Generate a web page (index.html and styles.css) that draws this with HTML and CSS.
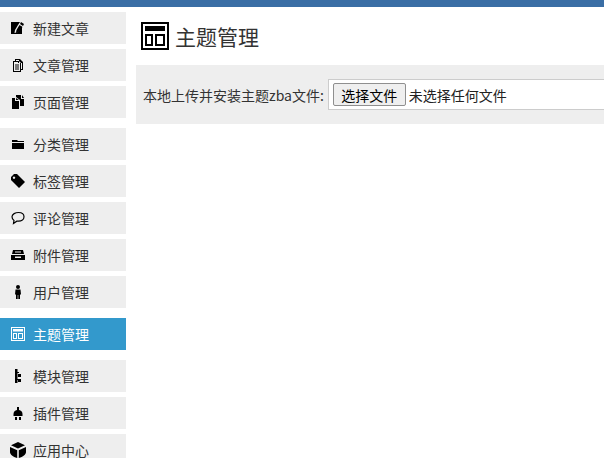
FILE: index.html
```html
<!DOCTYPE html>
<html lang="zh-CN">
<head>
    <meta charset="UTF-8">
    <meta name="viewport" content="width=device-width, initial-scale=1.0">
    <title>主题管理</title>
    <link rel="stylesheet" href="styles.css">
</head>
<body>
    <div class="top-bar"></div>
    <div class="layout">
        <div class="sidebar">
            <ul class="menu">
                <li class="menu-item">
                    <svg class="icon" viewBox="0 0 14 14"><path d="M0 1h9L7 4 4 9l-.5 3L7 11l4-6v8H0z"/><path d="M9 3l1-2 3 2-1 2zM8.500 4l3 2-4 5-2 1-.5-.5.500-2.500z"/></svg>
                    <span>新建文章</span>
                </li>
                <li class="menu-item">
                    <svg class="icon" viewBox="0 0 14 14"><path fill-rule="evenodd" d="M2 3h2V1h5l3 3v8h-2v2H2zM3 4v9h6V5H7V4zM5 2v1h3l2 2v6h1V5H8V2z"/><path d="M4 6.500h4v1H4zM4 8.500h4v1H4zM4 10.500h4v1H4z"/></svg>
                    <span>文章管理</span>
                </li>
                <li class="menu-item">
                    <svg class="icon" viewBox="0 0 14 14"><path d="M1 3h3v3h4v8H1zM5 3l3 2h-3zM5 0h5v4h3v7H9V5L5 2zM11 0l2 3h-2z"/></svg>
                    <span>页面管理</span>
                </li>
            </ul>
            <ul class="menu">
                <li class="menu-item">
                    <svg class="icon" viewBox="0 0 14 14"><path d="M1 4V3h5l1 1h6v1H1zM1 6h12v6H1z"/></svg>
                    <span>分类管理</span>
                </li>
                <li class="menu-item">
                    <svg class="icon" viewBox="0 0 14 14"><path fill-rule="evenodd" d="M0 3l3-3h3l8 8-6 6-8-8zM3 2.500a1.200 1.200 0 1 0 .01 0z"/></svg>
                    <span>标签管理</span>
                </li>
                <li class="menu-item">
                    <svg class="icon" viewBox="0 0 14 14"><path d="M7.500 1.500c3 0 5.500 1.600 5.500 4.300s-2.500 4.400-5.500 4.400H5.800L2.500 12.500l.5-3C1.800 8.700 1 7.400 1 5.800c0-2.700 3.500-4.300 6.500-4.300z" fill="none" stroke="#000" stroke-width="1.200"/></svg>
                    <span>评论管理</span>
                </li>
                <li class="menu-item">
                    <svg class="icon" viewBox="0 0 14 14"><path fill-rule="evenodd" d="M2 2h10l1 4H1zM4 3.500v1h6v-1zM0 7h14v5H0zM4 8.500v1.500h6V8.500z"/></svg>
                    <span>附件管理</span>
                </li>
                <li class="menu-item">
                    <svg class="icon" viewBox="0 0 14 14"><circle cx="7" cy="2" r="2"/><path d="M4.500 4.500h5l.5 5H9v5H7.300V10H6.700v4.500H5v-5H4z"/></svg>
                    <span>用户管理</span>
                </li>
            </ul>
            <ul class="menu">
                <li class="menu-item active">
                    <svg class="icon" viewBox="0 0 14 14"><path fill="#fff" fill-rule="evenodd" d="M0 0h14v14H0zM1 1v12h12V1zM2 2h10v2.500H2zM2 6h4v6H2zM3 7v4h2V7zM7 6h5v6H7zM8 7v4h3V7z"/></svg>
                    <span>主题管理</span>
                </li>
            </ul>
            <ul class="menu">
                <li class="menu-item">
                    <svg class="icon" viewBox="0 0 14 14"><path d="M4 0h2.500v14H4zM6 3h2v1H6zM7 5h3v3H7zM6 10h2v1H6zM7 10h3v3H7z"/></svg>
                    <span>模块管理</span>
                </li>
                <li class="menu-item">
                    <svg class="icon" viewBox="0 0 14 14"><path d="M6 1h2v3c2 .3 3.500 2 3.500 4v2h-9V8C2.500 6 4 4.300 6 4zM4 11h2v3H4zM8 11h2v3H8z"/></svg>
                    <span>插件管理</span>
                </li>
                <li class="menu-item">
                    <svg class="icon icon-large" viewBox="0 0 16 16"><path d="M8 0l7 3.200L8 6.500 1 3.200zM0 5l7.200 3.300V16C3 14.800 0 12.500 0 10zM16 5v5c0 2.500-3 4.800-7.200 6V8.300z"/></svg>
                    <span>应用中心</span>
                </li>
            </ul>
        </div>
        <div class="main">
            <div class="page-title">
                <svg class="title-icon" viewBox="0 0 28 28"><path fill-rule="evenodd" d="M0 0h28v28H0zM2 2v24h24V2zM4 4h20v5H4zM4 12h8v12H4zM6 14v8h4v-8zM14 12h10v12H14zM16 14v8h6v-8z"/></svg>
                <h1>主题管理</h1>
            </div>
            <div class="upload-panel">
                <label class="upload-label">本地上传并安装主题zba文件:</label>
                <div class="file-box">
                    <button class="file-button" type="button">选择文件</button>
                    <span class="file-name">未选择任何文件</span>
                </div>
            </div>
        </div>
    </div>
</body>
</html>
```

FILE: styles.css
```css
html, body {
    height: 100%;
}
body {
    margin: 0;
    overflow: hidden;
    background-color: #fff;
    color: #333;
    font-family: "Noto Sans CJK SC", "Liberation Sans", sans-serif;
    font-size: 14px;
}
.top-bar {
    height: 7px;
    background-color: #3a6ea5;
}
.layout {
    display: flex;
}
.sidebar {
    flex: none;
    width: 126px;
    padding-top: 5px;
}
.menu {
    list-style: none;
    margin: 0 0 10px;
    padding: 0;
}
.menu-item {
    display: flex;
    align-items: center;
    height: 32px;
    margin-bottom: 5px;
    background-color: #eee;
}
.menu-item:last-child {
    margin-bottom: 0;
}
.menu-item.active {
    background-color: #3399cc;
    color: #fff;
}
.icon {
    flex: none;
    width: 14px;
    height: 14px;
    margin: 0 8px 0 11px;
}
.icon-large {
    width: 16px;
    height: 16px;
    margin: 0 7px 0 10px;
}
.main {
    flex: 1;
    min-width: 0;
    margin-left: 10px;
}
.page-title {
    display: flex;
    align-items: center;
    height: 58px;
    padding-left: 5px;
}
.title-icon {
    flex: none;
    width: 28px;
    height: 28px;
    margin-right: 6px;
}
.page-title h1 {
    margin: 0;
    font-size: 21px;
    font-weight: normal;
    color: #333;
}
.upload-panel {
    display: flex;
    align-items: center;
    height: 59px;
    padding-left: 7px;
    overflow: hidden;
    background-color: #eee;
}
.upload-label {
    flex: none;
    margin-right: 4px;
}
.file-box {
    flex: none;
    display: flex;
    align-items: center;
    box-sizing: border-box;
    width: 400px;
    height: 31px;
    padding-left: 4px;
    background-color: #fff;
    border: 1px solid #ccc;
}
.file-button {
    height: 23px;
    width: 73px;
    padding: 0;
    margin-right: 3px;
    font-family: inherit;
    font-size: 14px;
    color: #000;
    background-color: #efefef;
    border: 1px solid #8f8f8f;
    border-radius: 2px;
}
.file-name {
    color: #222;
}
```
